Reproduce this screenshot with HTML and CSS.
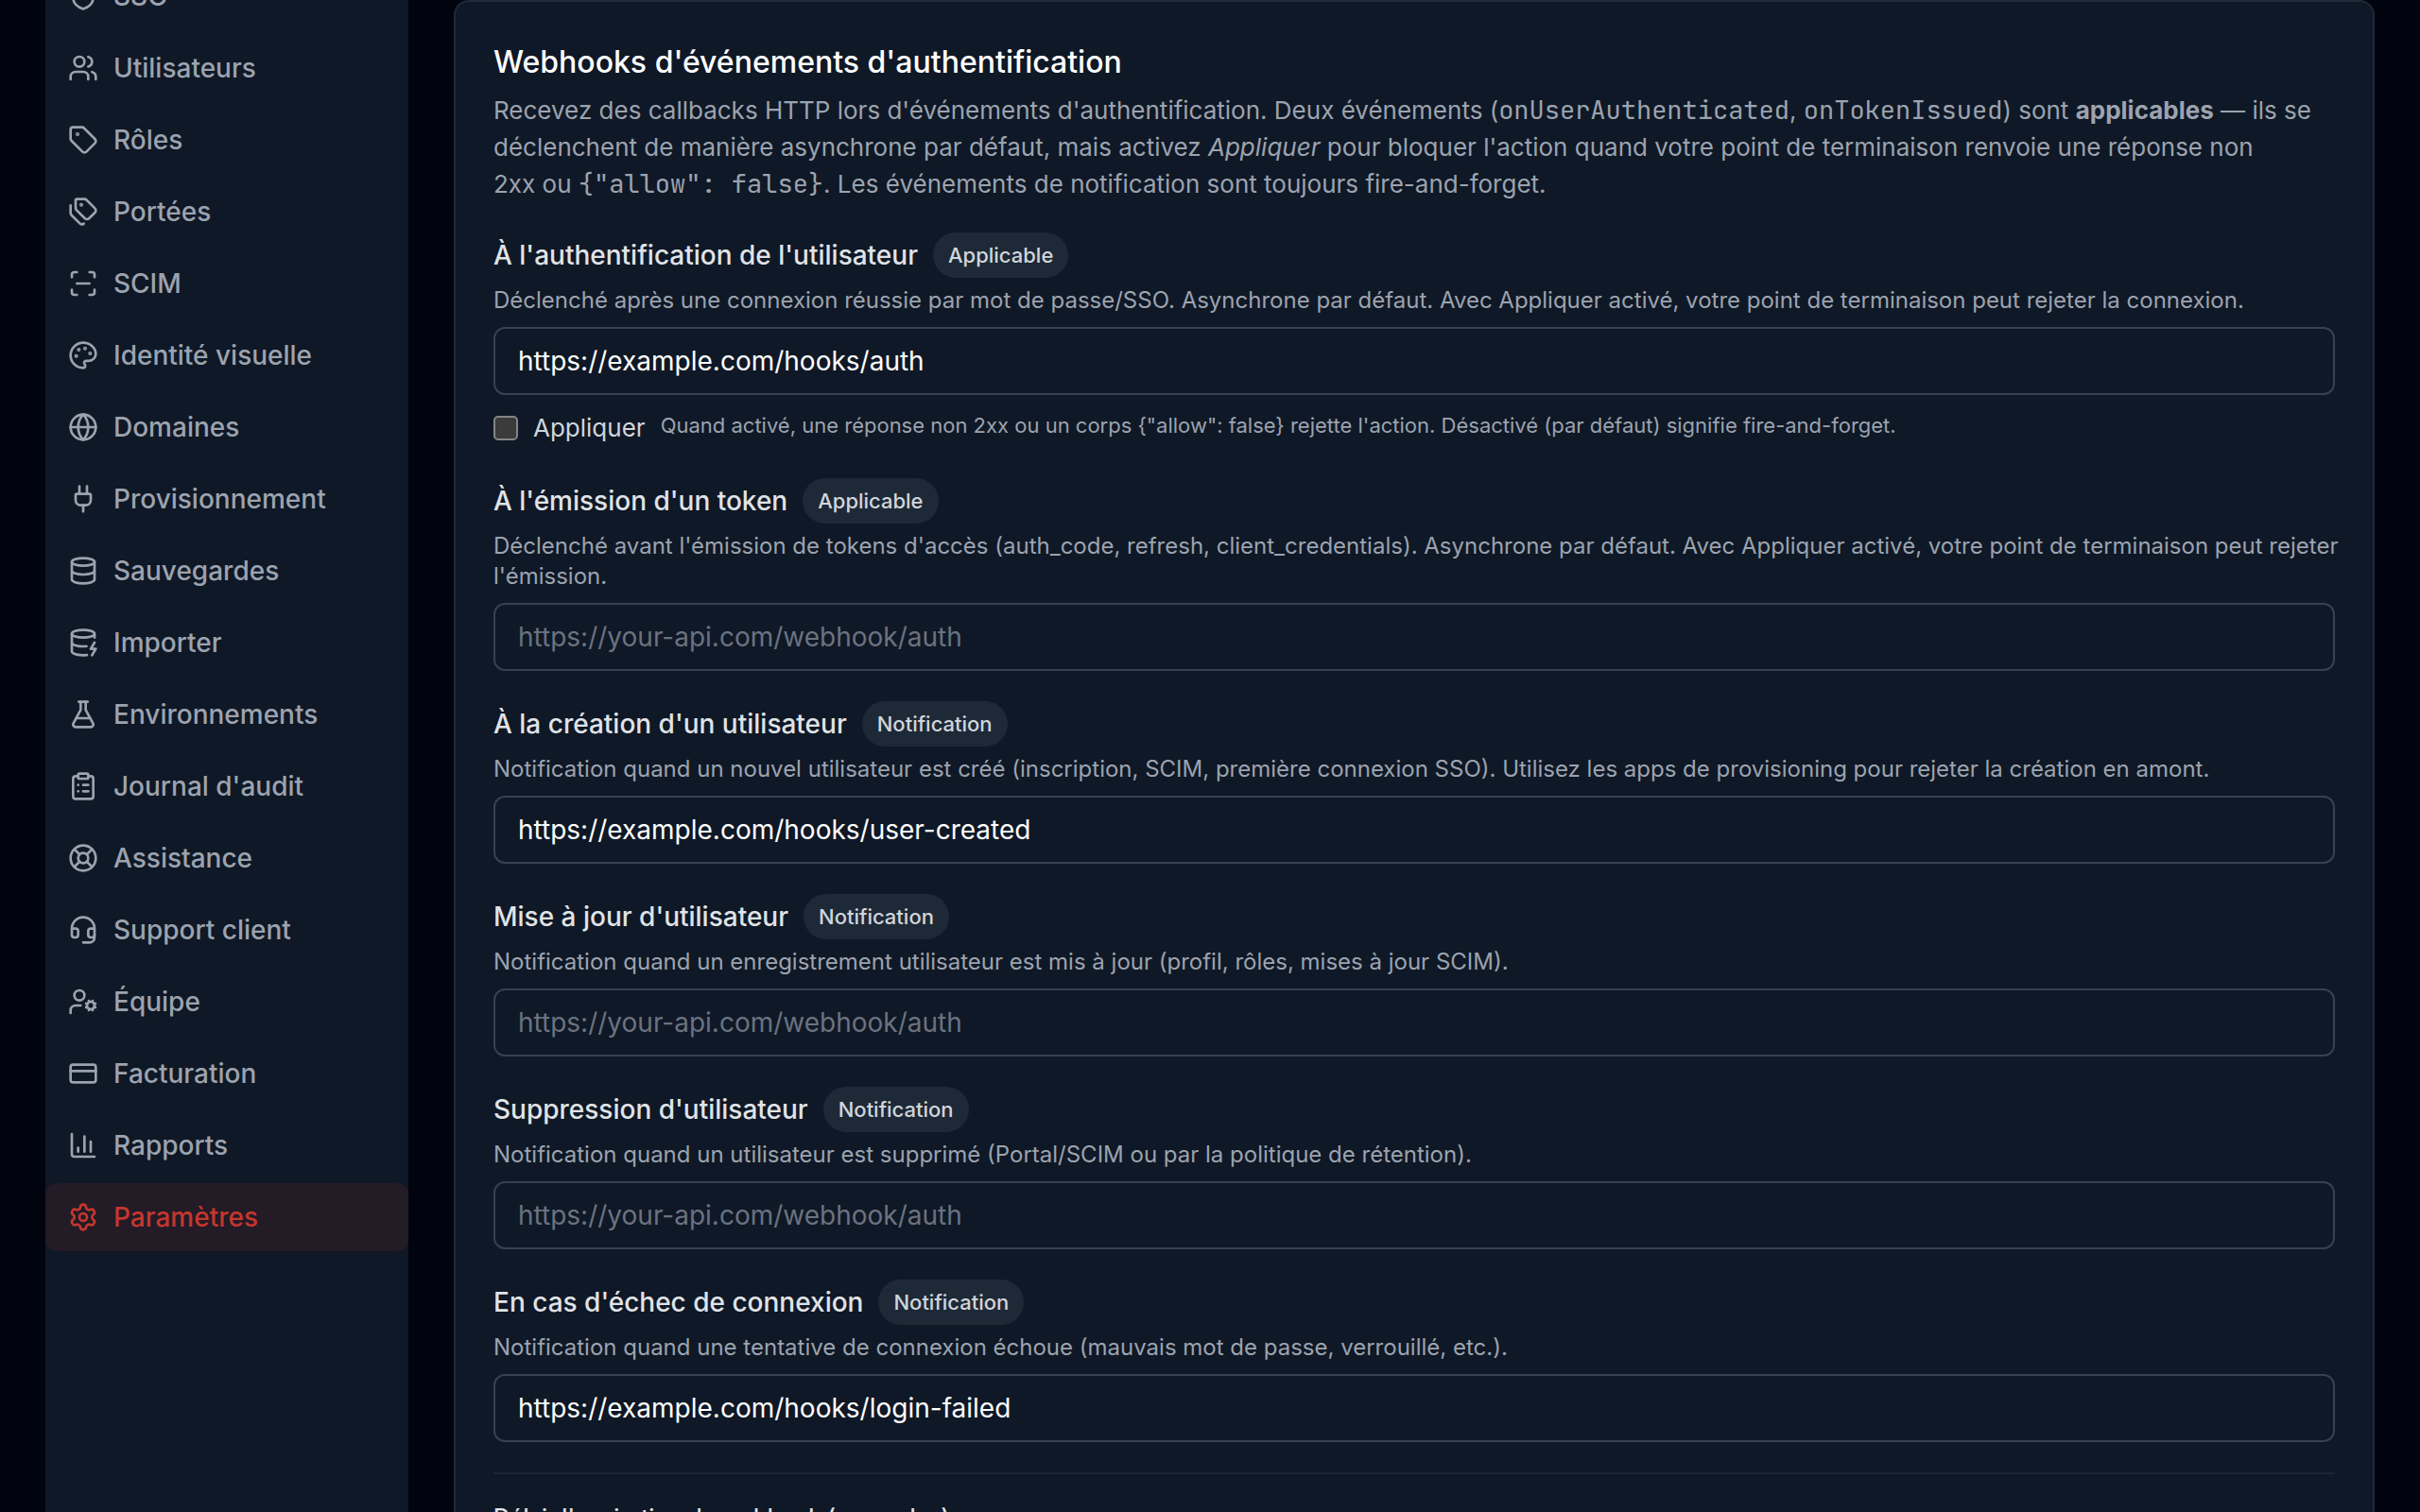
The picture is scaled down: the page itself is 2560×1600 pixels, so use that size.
FILE: index.html
```html
<!DOCTYPE html>
<html lang="fr">
<head>
<meta charset="utf-8">
<meta name="viewport" content="width=device-width, initial-scale=1">
<title>Paramètres</title>
<link rel="stylesheet" href="styles.css">
</head>
<body>
<div class="shell">
  <aside class="sidebar">
    <nav class="nav" aria-label="Navigation principale">
      <a class="nav-item" href="#sso"><svg class="icon" viewBox="0 0 24 24"><path d="M20 13c0 5-3.500 7.500-7.660 8.950a1 1 0 0 1-.67-.01C7.500 20.500 4 18 4 13V6a1 1 0 0 1 1-1c2 0 4.500-1.200 6.240-2.720a1.170 1.170 0 0 1 1.520 0C14.510 3.810 17 5 19 5a1 1 0 0 1 1 1z"/></svg>SSO</a>
      <a class="nav-item" href="#utilisateurs"><svg class="icon" viewBox="0 0 24 24"><path d="M16 21v-2a4 4 0 0 0-4-4H6a4 4 0 0 0-4 4v2"/><path d="M16 3.128a4 4 0 0 1 0 7.744"/><path d="M22 21v-2a4 4 0 0 0-3-3.870"/><circle cx="9" cy="7" r="4"/></svg>Utilisateurs</a>
      <a class="nav-item" href="#roles"><svg class="icon" viewBox="0 0 24 24"><path d="M12.586 2.586A2 2 0 0 0 11.172 2H4a2 2 0 0 0-2 2v7.172a2 2 0 0 0 .586 1.414l8.704 8.704a2.426 2.426 0 0 0 3.420 0l6.580-6.580a2.426 2.426 0 0 0 0-3.420z"/><circle cx="7.500" cy="7.500" r=".5" fill="currentColor"/></svg>Rôles</a>
      <a class="nav-item" href="#portees"><svg class="icon" viewBox="0 0 24 24"><path d="M13.172 2a2 2 0 0 1 1.414.586l6.710 6.710a2.400 2.400 0 0 1 0 3.408l-4.592 4.592a2.400 2.400 0 0 1-3.408 0l-6.710-6.710A2 2 0 0 1 6 9.172V3a1 1 0 0 1 1-1z"/><path d="M2 7v6.172a2 2 0 0 0 .586 1.414l6.710 6.710a2.400 2.400 0 0 0 3.191.193"/><circle cx="10.500" cy="6.500" r=".5" fill="currentColor"/></svg>Portées</a>
      <a class="nav-item" href="#scim"><svg class="icon" viewBox="0 0 24 24"><path d="M3 7V5a2 2 0 0 1 2-2h2"/><path d="M17 3h2a2 2 0 0 1 2 2v2"/><path d="M21 17v2a2 2 0 0 1-2 2h-2"/><path d="M7 21H5a2 2 0 0 1-2-2v-2"/><path d="M7 12h10"/></svg>SCIM</a>
      <a class="nav-item" href="#identite"><svg class="icon" viewBox="0 0 24 24"><path d="M12 2C6.500 2 2 6.500 2 12s4.500 10 10 10c.926 0 1.648-.746 1.648-1.688 0-.437-.18-.835-.437-1.125-.29-.289-.438-.652-.438-1.125a1.640 1.640 0 0 1 1.668-1.668h1.996c3.051 0 5.555-2.503 5.555-5.554C21.965 6.012 17.461 2 12 2z"/><circle cx="13.500" cy="6.500" r=".5" fill="currentColor"/><circle cx="17.500" cy="10.500" r=".5" fill="currentColor"/><circle cx="6.500" cy="12.500" r=".5" fill="currentColor"/><circle cx="8.500" cy="7.500" r=".5" fill="currentColor"/></svg>Identité visuelle</a>
      <a class="nav-item" href="#domaines"><svg class="icon" viewBox="0 0 24 24"><circle cx="12" cy="12" r="10"/><path d="M12 2a14.500 14.500 0 0 0 0 20 14.500 14.500 0 0 0 0-20"/><path d="M2 12h20"/></svg>Domaines</a>
      <a class="nav-item" href="#provisionnement"><svg class="icon" viewBox="0 0 24 24"><path d="M12 22v-5"/><path d="M15 8V2"/><path d="M17 8a1 1 0 0 1 1 1v4a4 4 0 0 1-4 4h-4a4 4 0 0 1-4-4V9a1 1 0 0 1 1-1z"/><path d="M9 8V2"/></svg>Provisionnement</a>
      <a class="nav-item" href="#sauvegardes"><svg class="icon" viewBox="0 0 24 24"><ellipse cx="12" cy="5" rx="9" ry="3"/><path d="M3 5v14a9 3 0 0 0 18 0V5"/><path d="M3 12a9 3 0 0 0 18 0"/></svg>Sauvegardes</a>
      <a class="nav-item" href="#importer"><svg class="icon" viewBox="0 0 24 24"><ellipse cx="12" cy="5" rx="9" ry="3"/><path d="M3 5v14a9 3 0 0 0 12 2.840"/><path d="M21 5v3"/><path d="m21 12-3 5h4l-3 5"/><path d="M3 12a9 3 0 0 0 11.590 2.870"/></svg>Importer</a>
      <a class="nav-item" href="#environnements"><svg class="icon" viewBox="0 0 24 24"><path d="M14 2v6a2 2 0 0 0 .245.960l5.510 10.080A2 2 0 0 1 18 22H6a2 2 0 0 1-1.755-2.960l5.510-10.080A2 2 0 0 0 10 8V2"/><path d="M6.453 15h11.094"/><path d="M8.500 2h7"/></svg>Environnements</a>
      <a class="nav-item" href="#journal"><svg class="icon" viewBox="0 0 24 24"><rect width="8" height="4" x="8" y="2" rx="1"/><path d="M16 4h2a2 2 0 0 1 2 2v14a2 2 0 0 1-2 2H6a2 2 0 0 1-2-2V6a2 2 0 0 1 2-2h2"/><path d="M12 11h4"/><path d="M12 16h4"/><path d="M8 11h.01"/><path d="M8 16h.01"/></svg>Journal d'audit</a>
      <a class="nav-item" href="#assistance"><svg class="icon" viewBox="0 0 24 24"><circle cx="12" cy="12" r="10"/><path d="m4.930 4.930 4.240 4.240"/><path d="m14.830 9.170 4.240-4.240"/><path d="m14.830 14.830 4.240 4.240"/><path d="m9.170 14.830-4.240 4.240"/><circle cx="12" cy="12" r="4"/></svg>Assistance</a>
      <a class="nav-item" href="#support"><svg class="icon" viewBox="0 0 24 24"><path d="M3 11h3a2 2 0 0 1 2 2v3a2 2 0 0 1-2 2H5a2 2 0 0 1-2-2v-5Zm0 0a9 9 0 1 1 18 0m0 0v5a2 2 0 0 1-2 2h-1a2 2 0 0 1-2-2v-3a2 2 0 0 1 2-2h3Z"/><path d="M21 16v2a4 4 0 0 1-4 4h-5"/></svg>Support client</a>
      <a class="nav-item" href="#equipe"><svg class="icon" viewBox="0 0 24 24"><path d="M10 15H6a4 4 0 0 0-4 4v2"/><path d="m14.305 16.530.923-.382"/><path d="m15.228 13.852-.923-.383"/><path d="m16.852 12.228-.383-.923"/><path d="m16.852 17.772-.383.924"/><path d="m19.148 12.228.383-.923"/><path d="m19.530 18.696-.382-.924"/><path d="m20.772 13.852.924-.383"/><path d="m20.772 16.148.924.383"/><circle cx="18" cy="15" r="3"/><circle cx="9" cy="7" r="4"/></svg>Équipe</a>
      <a class="nav-item" href="#facturation"><svg class="icon" viewBox="0 0 24 24"><rect width="20" height="14" x="2" y="5" rx="2"/><path d="M2 10h20"/></svg>Facturation</a>
      <a class="nav-item" href="#rapports"><svg class="icon" viewBox="0 0 24 24"><path d="M3 3v16a2 2 0 0 0 2 2h16"/><path d="M18 17V9"/><path d="M13 17V5"/><path d="M8 17v-3"/></svg>Rapports</a>
      <a class="nav-item nav-item--active" href="#parametres" aria-current="page"><svg class="icon" viewBox="0 0 24 24"><path d="M9.671 4.136a2.340 2.340 0 0 1 4.659 0 2.340 2.340 0 0 0 3.319 1.915 2.340 2.340 0 0 1 2.330 4.033 2.340 2.340 0 0 0 0 3.831 2.340 2.340 0 0 1-2.330 4.033 2.340 2.340 0 0 0-3.319 1.915 2.340 2.340 0 0 1-4.659 0 2.340 2.340 0 0 0-3.320-1.915 2.340 2.340 0 0 1-2.330-4.033 2.340 2.340 0 0 0 0-3.831A2.340 2.340 0 0 1 6.350 6.051a2.340 2.340 0 0 0 3.319-1.915"/><circle cx="12" cy="12" r="3"/></svg>Paramètres</a>
    </nav>
  </aside>

  <main class="main">
    <section class="card">
      <h2 class="card-title">Webhooks d'événements d'authentification</h2>
      <p class="card-text">Recevez des callbacks HTTP lors d'événements d'authentification. Deux événements (<code>onUserAuthenticated</code>, <code>onTokenIssued</code>) sont <strong>applicables</strong> — ils se déclenchent de manière asynchrone par défaut, mais activez <em>Appliquer</em> pour bloquer l'action quand votre point de terminaison renvoie une réponse non 2xx&nbsp;ou <code>{"allow": false}</code>. Les événements de notification sont toujours fire-and-forget.</p>

      <div class="fields">
        <div class="field">
          <div class="field-head"><label for="hook-auth">À l'authentification de l'utilisateur</label><span class="badge">Applicable</span></div>
          <p class="field-help">Déclenché après une connexion réussie par mot de passe/SSO. Asynchrone par défaut. Avec Appliquer activé, votre point de terminaison peut rejeter la connexion.</p>
          <input class="input" id="hook-auth" type="url" value="https://example.com/hooks/auth" placeholder="https://your-api.com/webhook/auth">
          <div class="enforce">
            <label class="enforce-label"><input class="checkbox" type="checkbox">Appliquer</label>
            <span class="enforce-hint">Quand activé, une réponse non 2xx ou un corps {"allow": false} rejette l'action. Désactivé (par défaut) signifie fire-and-forget.</span>
          </div>
        </div>

        <div class="field">
          <div class="field-head"><label for="hook-token">À l'émission d'un token</label><span class="badge">Applicable</span></div>
          <p class="field-help">Déclenché avant l'émission de tokens d'accès (auth_code, refresh, client_credentials). Asynchrone par défaut. Avec Appliquer activé, votre point de terminaison peut rejeter l'émission.</p>
          <input class="input" id="hook-token" type="url" placeholder="https://your-api.com/webhook/auth">
        </div>

        <div class="field">
          <div class="field-head"><label for="hook-created">À la création d'un utilisateur</label><span class="badge">Notification</span></div>
          <p class="field-help">Notification quand un nouvel utilisateur est créé (inscription, SCIM, première connexion SSO). Utilisez les apps de provisioning pour rejeter la création en amont.</p>
          <input class="input" id="hook-created" type="url" value="https://example.com/hooks/user-created" placeholder="https://your-api.com/webhook/auth">
        </div>

        <div class="field">
          <div class="field-head"><label for="hook-updated">Mise à jour d'utilisateur</label><span class="badge">Notification</span></div>
          <p class="field-help">Notification quand un enregistrement utilisateur est mis à jour (profil, rôles, mises à jour SCIM).</p>
          <input class="input" id="hook-updated" type="url" placeholder="https://your-api.com/webhook/auth">
        </div>

        <div class="field">
          <div class="field-head"><label for="hook-deleted">Suppression d'utilisateur</label><span class="badge">Notification</span></div>
          <p class="field-help">Notification quand un utilisateur est supprimé (Portal/SCIM ou par la politique de rétention).</p>
          <input class="input" id="hook-deleted" type="url" placeholder="https://your-api.com/webhook/auth">
        </div>

        <div class="field">
          <div class="field-head"><label for="hook-failed">En cas d'échec de connexion</label><span class="badge">Notification</span></div>
          <p class="field-help">Notification quand une tentative de connexion échoue (mauvais mot de passe, verrouillé, etc.).</p>
          <input class="input" id="hook-failed" type="url" value="https://example.com/hooks/login-failed" placeholder="https://your-api.com/webhook/auth">
        </div>

        <div class="timeout">
          <label class="timeout-label" for="hook-timeout">Délai d'expiration du webhook (secondes)</label>
          <input class="input" id="hook-timeout" type="number">
        </div>
      </div>
    </section>
  </main>
</div>
</body>
</html>
```
FILE: styles.css
```css
* {
  box-sizing: border-box;
}

body {
  margin: 0;
  background: #01040f;
  color: #d1d5db;
  font-family: Inter, "Liberation Sans", sans-serif;
  font-size: 28px;
}

h2,
p {
  margin: 0;
}

.shell {
  display: flex;
  gap: 48px;
  height: 100vh;
  padding: 0 48px;
  overflow: hidden;
}

/* Sidebar */
.sidebar {
  flex: 0 0 384px;
  overflow: hidden;
  background: #0f1826;
}

/* The list is scrolled part of the way down */
.nav {
  display: flex;
  flex-direction: column;
  gap: 4px;
  margin-top: -40px;
}

.nav-item {
  display: flex;
  align-items: center;
  gap: 16px;
  height: 72px;
  padding: 0 24px;
  border-radius: 12px;
  color: #9ca3af;
  font-weight: 500;
  text-decoration: none;
}

.nav-item--active {
  background: #231b25;
  color: #c4372f;
}

.icon {
  flex: none;
  width: 32px;
  height: 32px;
  fill: none;
  stroke: currentColor;
  stroke-width: 2;
  stroke-linecap: round;
  stroke-linejoin: round;
}

/* Content */
.main {
  flex: 1;
  min-width: 0;
}

.card {
  padding: 40px;
  border: 2px solid #1f2937;
  border-radius: 16px;
  background: #0f1826;
}

.card-title {
  color: #fff;
  font-size: 32px;
  font-weight: 500;
  line-height: 47px;
}

.card-text {
  margin-top: 8px;
  color: #9ca3af;
  font-size: 26px;
  line-height: 39px;
}

.card-text code {
  font-family: "JetBrains Mono", "Liberation Mono", monospace;
  font-size: 27px;
  line-height: 1;
}

.card-text strong {
  font-weight: 700;
}

.fields {
  display: flex;
  flex-direction: column;
  gap: 32px;
  margin-top: 32px;
}

.field-head {
  display: flex;
  align-items: center;
  gap: 16px;
  height: 48px;
  color: #e0e3e7;
  font-weight: 500;
}

.badge {
  padding: 0 16px;
  border-radius: 24px;
  background: #1e2937;
  color: #d1d5db;
  font-size: 22px;
  line-height: 48px;
}

/* Help text may run slightly into the card's padding */
.field-help {
  margin: 8px -16px 12px 0;
  color: #9ca3af;
  font-size: 24px;
  line-height: 32px;
}

.input {
  display: block;
  width: 100%;
  height: 72px;
  padding: 0 24px;
  border: 2px solid #374151;
  border-radius: 12px;
  background: transparent;
  color: #fff;
  font: inherit;
}

.input::placeholder {
  color: #6b7280;
  opacity: 1;
}

.enforce {
  display: flex;
  align-items: flex-start;
  gap: 16px;
  min-height: 40px;
  margin-top: 16px;
}

.enforce-label {
  display: flex;
  align-items: center;
  gap: 16px;
  font-size: 26px;
  line-height: 38px;
}

.enforce-hint {
  color: #9ca3af;
  font-size: 22px;
  line-height: 33px;
}

.checkbox {
  width: 26px;
  height: 26px;
  margin: 0;
  border: 2px solid #858585;
  border-radius: 5px;
  background: #3b3b3b;
  appearance: none;
}

.checkbox:checked {
  background: #c4372f;
}

.timeout {
  padding-top: 28px;
  border-top: 2px solid #1b2533;
}

.timeout-label {
  display: block;
  margin-bottom: 12px;
  color: #e0e3e7;
  font-size: 24px;
  font-weight: 500;
  line-height: 36px;
}
```
